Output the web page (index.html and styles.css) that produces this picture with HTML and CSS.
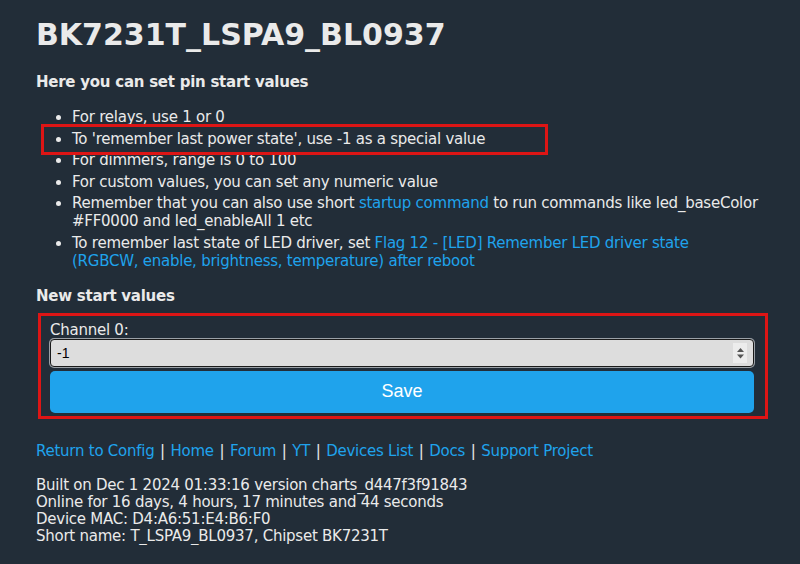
FILE: index.html
```html
<!DOCTYPE html>
<html>
<head>
<meta charset="utf-8">
<title>BK7231T_LSPA9_BL0937</title>
<link rel="stylesheet" href="styles.css">
</head>
<body>
<div class="page">
  <h1 class="title">BK7231T_LSPA9_BL0937</h1>
  <h3 class="sub">Here you can set pin start values</h3>
  <ul class="tips">
    <li>For relays, use 1 or 0</li>
    <li class="hl">To 'remember last power state', use -1 as a special value<span class="mark"></span></li>
    <li>For dimmers, range is 0 to 100</li>
    <li>For custom values, you can set any numeric value</li>
    <li>Remember that you can also use short <a href="#">startup command</a> to run commands like led_baseColor #FF0000 and led_enableAll 1 etc</li>
    <li>To remember last state of LED driver, set <a href="#">Flag 12 - [LED] Remember LED driver state<br>(RGBCW, enable, brightness, temperature) after reboot</a></li>
  </ul>
  <h3 class="sub sub2">New start values</h3>
  <form class="box">
    <label class="lbl">Channel 0:</label>
    <div class="field">
      <span class="val">-1</span>
      <span class="spin">
        <svg width="11" height="16" viewBox="0 0 11 16"><path d="M2 7 L5.5 3 L9 7 Z" fill="#555"/><path d="M2 9.5 L5.5 13.5 L9 9.5 Z" fill="#555"/></svg>
      </span>
    </div>
    <div class="btn">Save</div>
  </form>
  <div class="links">
    <a href="#">Return to Config</a> | <a href="#">Home</a> | <a href="#">Forum</a> | <a href="#">YT</a> | <a href="#">Devices List</a> | <a href="#">Docs</a> | <a href="#">Support Project</a>
  </div>
  <div class="info">
    <div>Built on Dec 1 2024 01:33:16 version charts_d447f3f91843</div>
    <div>Online for 16 days, 4 hours, 17 minutes and 44 seconds</div>
    <div>Device MAC: D4:A6:51:E4:B6:F0</div>
    <div>Short name: T_LSPA9_BL0937, Chipset BK7231T</div>
  </div>
</div>
</body>
</html>
```
FILE: styles.css
```css
html, body {
  margin: 0;
  padding: 0;
  background: #222d38;
}
body {
  color: #eaeaea;
  font-family: "DejaVu Sans", Verdana, sans-serif;
  font-size: 15px;
  letter-spacing: -0.25px;
}
.page {
  width: 728px;
  padding: 15px 0 0 36px;
}
a {
  color: #1fa3ec;
  text-decoration: none;
}
.title {
  font-size: 30px;
  font-weight: bold;
  margin: 0;
  line-height: 40px;
  letter-spacing: 0;
}
.sub {
  font-size: 15px;
  font-weight: bold;
  margin: 17px 0 0 0;
  line-height: 20px;
}
.tips {
  margin: 16px 0 0 0;
  padding-left: 36px;
  line-height: 18px;
}
.tips li {
  margin-bottom: 3.5px;
}
.hl {
  position: relative;
}
.mark {
  position: absolute;
  left: -31px;
  top: -6px;
  width: 501px;
  height: 25px;
  border: 3px solid #dd1515;
  pointer-events: none;
}
.sub2 {
  margin-top: 16px;
}
.box {
  margin: 7px 0 0 2px;
  width: 704px;
  border: 3px solid #dd1515;
  padding: 5px 11px 3px 9px;
  display: flex;
  flex-direction: column;
}
.lbl {
  line-height: 18px;
}
.field {
  height: 26px;
  background: #dddddd;
  border: 1px solid #1a1a1a;
  box-shadow: 0 0 0 1px #9aa0a6;
  border-radius: 4px;
  display: flex;
  align-items: center;
  justify-content: space-between;
  padding: 0 6px;
  font-family: "Liberation Sans", Arial, sans-serif;
  font-size: 14px;
  letter-spacing: 0;
  color: #000;
}
.spin {
  display: flex;
  align-items: center;
  justify-content: center;
  background: #ececec;
  height: 20px;
  width: 14px;
}
.btn {
  margin-top: 4px;
  height: 42px;
  background: #1fa3ec;
  border-radius: 5px;
  color: #fff;
  font-family: "Liberation Sans", Arial, sans-serif;
  font-size: 18px;
  letter-spacing: 0;
  display: flex;
  align-items: center;
  justify-content: center;
}
.links {
  margin-top: 23px;
  line-height: 18px;
  word-spacing: 1.1px;
}
.links a {
  word-spacing: 0;
}
.info {
  margin-top: 17px;
  line-height: 17px;
}
```
